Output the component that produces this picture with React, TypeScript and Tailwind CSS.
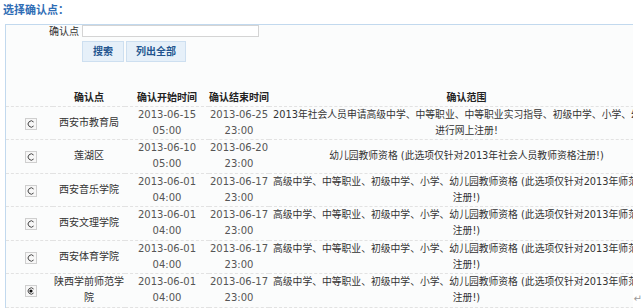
const rows = [
  {
    name: ['西安市教育局'],
    start: '2013-06-15',
    startTime: '05:00',
    end: '2013-06-25',
    endTime: '23:00',
    scope: ['2013年社会人员申请高级中学、中等职业、中等职业实习指导、初级中学、小学、幼儿园教师资格', '进行网上注册!'],
    checked: false,
  },
  {
    name: ['莲湖区'],
    start: '2013-06-10',
    startTime: '05:00',
    end: '2013-06-20',
    endTime: '23:00',
    scope: ['幼儿园教师资格 (此选项仅针对2013年社会人员教师资格注册!)'],
    checked: false,
  },
  {
    name: ['西安音乐学院'],
    start: '2013-06-01',
    startTime: '04:00',
    end: '2013-06-17',
    endTime: '23:00',
    scope: ['高级中学、中等职业、初级中学、小学、幼儿园教师资格 (此选项仅针对2013年师范生教师资格', '注册!)'],
    checked: false,
  },
  {
    name: ['西安文理学院'],
    start: '2013-06-01',
    startTime: '04:00',
    end: '2013-06-17',
    endTime: '23:00',
    scope: ['高级中学、中等职业、初级中学、小学、幼儿园教师资格 (此选项仅针对2013年师范生教师资格', '注册!)'],
    checked: false,
  },
  {
    name: ['西安体育学院'],
    start: '2013-06-01',
    startTime: '04:00',
    end: '2013-06-17',
    endTime: '23:00',
    scope: ['高级中学、中等职业、初级中学、小学、幼儿园教师资格 (此选项仅针对2013年师范生教师资格', '注册!)'],
    checked: false,
  },
  {
    name: ['陕西学前师范学', '院'],
    start: '2013-06-01',
    startTime: '04:00',
    end: '2013-06-17',
    endTime: '23:00',
    scope: ['高级中学、中等职业、初级中学、小学、幼儿园教师资格 (此选项仅针对2013年师范生教师资格', '注册!)'],
    checked: true,
  },
];

// old-style square radio with an open ring
function Radio({ checked }: { checked: boolean }) {
  return (
    <span className="inline-flex w-[12px] h-[12px] items-center justify-center border border-[#cfcfcf] bg-[#f7f7f7]">
      <svg width="8" height="8" viewBox="0 0 8 8">
        <path d="M6.6 2A3.1 3.1 0 1 0 6.6 6" fill="none" stroke="#444" strokeWidth="1" />
        {checked && <circle cx="4" cy="4" r="1.6" fill="#111" />}
      </svg>
    </span>
  );
}

export default function App() {
  return (
    <div className="w-[644px] h-[308px] overflow-hidden bg-white text-[10px] text-[#333] font-['DejaVu_Sans','Noto_Sans_CJK_SC',sans-serif]">
      <div className="h-[24px] pl-[3px] pt-[4px] text-[11px] font-bold leading-[14px] text-[#2f6db5]">选择确认点：</div>

      <div className="flex">
        <div className="ml-[5px] w-[628px] h-[284px] overflow-hidden border-t-[1.5px] border-l border-[#c2d9ee] bg-[#fbfcfc]">
          <div className="flex items-center h-[12px]">
            <span className="w-[75px] pr-[2px] text-right text-[#333]">确认点</span>
            <div className="ml-[1px] w-[177px] h-[12px] border border-[#d4d4d4] bg-white" />
          </div>

          <div className="flex gap-[2px] ml-[76px] mt-[4px]">
            <button className="w-[42px] h-[21px] border border-[#cddff0] bg-[#e6f0f9] text-[10px] font-bold text-[#23558f]">搜索</button>
            <button className="w-[60px] h-[21px] border border-[#cddff0] bg-[#e6f0f9] text-[10px] font-bold text-[#23558f]">列出全部</button>
          </div>

          <table className="mt-[27px] table-fixed border-collapse w-[658px]">
            <colgroup>
              <col className="w-[47px]" />
              <col className="w-[72px]" />
              <col className="w-[84px]" />
              <col className="w-[60px]" />
              <col className="w-[395px]" />
            </colgroup>
            <thead>
              <tr className="h-[17px] border-b border-dashed border-[#e2e2e2] font-bold text-[#222]">
                <th />
                <th className="text-center">确认点</th>
                <th className="text-center">确认开始时间</th>
                <th className="text-center whitespace-nowrap">确认结束时间</th>
                <th className="text-center">确认范围</th>
              </tr>
            </thead>
            <tbody>
              {rows.map((r, i) => (
                <tr key={i} className="h-[33.5px] border-b border-dashed border-[#e2e2e2] leading-[16px]">
                  <td className="text-center align-middle pt-[4px] pl-[3px]">
                    <Radio checked={r.checked} />
                  </td>
                  <td className="text-center align-middle">
                    {r.name.map((n, j) => (
                      <div key={j} className="whitespace-nowrap">{n}</div>
                    ))}
                  </td>
                  <td className="text-center align-middle text-[#555]">
                    <div>{r.start}</div>
                    <div>{r.startTime}</div>
                  </td>
                  <td className="text-center align-middle text-[#555]">
                    <div>{r.end}</div>
                    <div>{r.endTime}</div>
                  </td>
                  <td className="text-center align-middle px-[4px] text-[9.8px]">
                    {r.scope.map((s, j) => (
                      <div key={j} className="whitespace-nowrap">{s}</div>
                    ))}
                  </td>
                </tr>
              ))}
            </tbody>
          </table>
        </div>

        <div className="flex flex-1 items-end justify-end pr-[2px] pb-[2px] text-[10px] text-[#999]">↵</div>
      </div>
    </div>
  );
}
